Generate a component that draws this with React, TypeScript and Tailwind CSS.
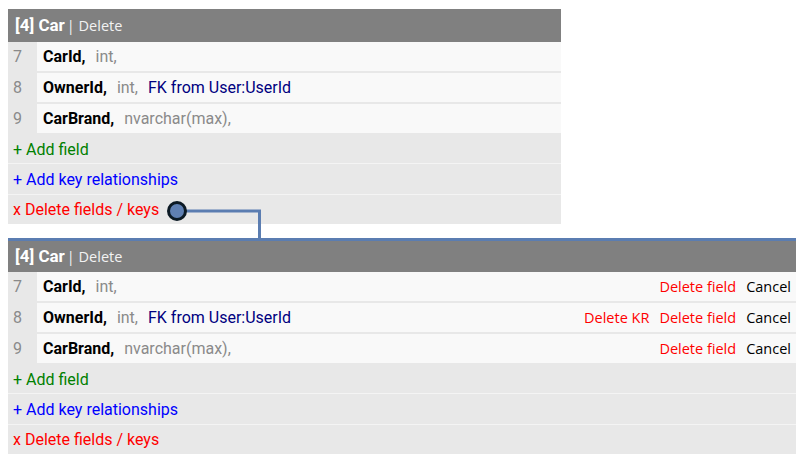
import React from "react"

type Field = {
  no: number
  name: string
  type: string
  fk?: string
  kr?: boolean
}

const fields: Field[] = [
  { no: 7, name: "CarId,", type: "int," },
  { no: 8, name: "OwnerId,", type: "int,", fk: "FK from User:UserId", kr: true },
  { no: 9, name: "CarBrand,", type: "nvarchar(max)," },
]

const roboto = "font-['Roboto','Liberation_Sans',sans-serif]"
const ubuntu = "font-['Open_Sans','DejaVu_Sans',sans-serif]"

function TableCard({ editing = false }: { editing?: boolean }) {
  return (
    <div className={editing ? "w-[788px] bg-[#e8e8e8] border-t-[3px] border-[#5b7db1]" : "w-[553px] bg-[#e8e8e8]"}>
      {/* header */}
      <div className={(editing ? "h-[31px]" : "h-[33px]") + " flex items-center bg-[#808080] px-[7px] text-white"}>
        <span className={roboto + " text-[17px] font-bold"}>[4] Car</span>
        <span className={ubuntu + " ml-[2px] text-[14.5px] text-[#f2f2f2]"}>| Delete</span>
      </div>

      {/* field rows */}
      {fields.map((f, i) => (
        <div key={f.no} className={(i > 0 ? "mt-[2px] " : "") + "flex h-[29px]"}>
          <div className={roboto + " w-[29px] pl-[5px] flex items-center text-[16px] text-[#8a8a8a]"}>{f.no}</div>
          <div className={roboto + " flex-1 flex items-center bg-[#f9f9f9] pl-[6px] pr-[5px] text-[16px]"}>
            <span className="font-bold text-black">{f.name}</span>
            <span className="ml-[10px] text-[#8a8a8a]">{f.type}</span>
            {f.fk && <span className="ml-[10px] text-[#000080]">{f.fk}</span>}
            {editing && (
              <div className={ubuntu + " ml-auto flex items-center gap-[10px] text-[14.5px]"}>
                {f.kr && <span className="text-[#ff0000]">Delete KR</span>}
                <span className="text-[#ff0000]">Delete field</span>
                <span className="text-black">Cancel</span>
              </div>
            )}
          </div>
        </div>
      ))}

      {/* actions */}
      <div className={roboto + " text-[16px]"}>
        <div className="h-[30px] flex items-center px-[5px] pt-[3px] text-[#008000]">+ Add field</div>
        <div className="h-[31px] flex items-center px-[5px] pt-[1px] border-t border-[#f4f4f4] text-[#0000ff]">+ Add key relationships</div>
        <div className="h-[30px] flex items-center px-[5px] border-t border-[#f4f4f4] text-[#ff0000]">x Delete fields / keys</div>
      </div>
    </div>
  )
}

export default function App() {
  return (
    <div className="relative w-[808px] h-[462px] bg-white pt-[9px] pl-[8px] overflow-hidden">
      <TableCard />
      <div className="h-[14px]" />
      <TableCard editing />

      {/* connector between the two tables */}
      <svg className="absolute left-0 top-0 pointer-events-none" width="808" height="462">
        <path d="M186 211 H259.5 V239" fill="none" stroke="#5b7db1" strokeWidth="3" />
        <circle cx="177" cy="211" r="8.5" fill="#5f80b3" stroke="#0c1a25" strokeWidth="3" />
      </svg>
    </div>
  )
}
